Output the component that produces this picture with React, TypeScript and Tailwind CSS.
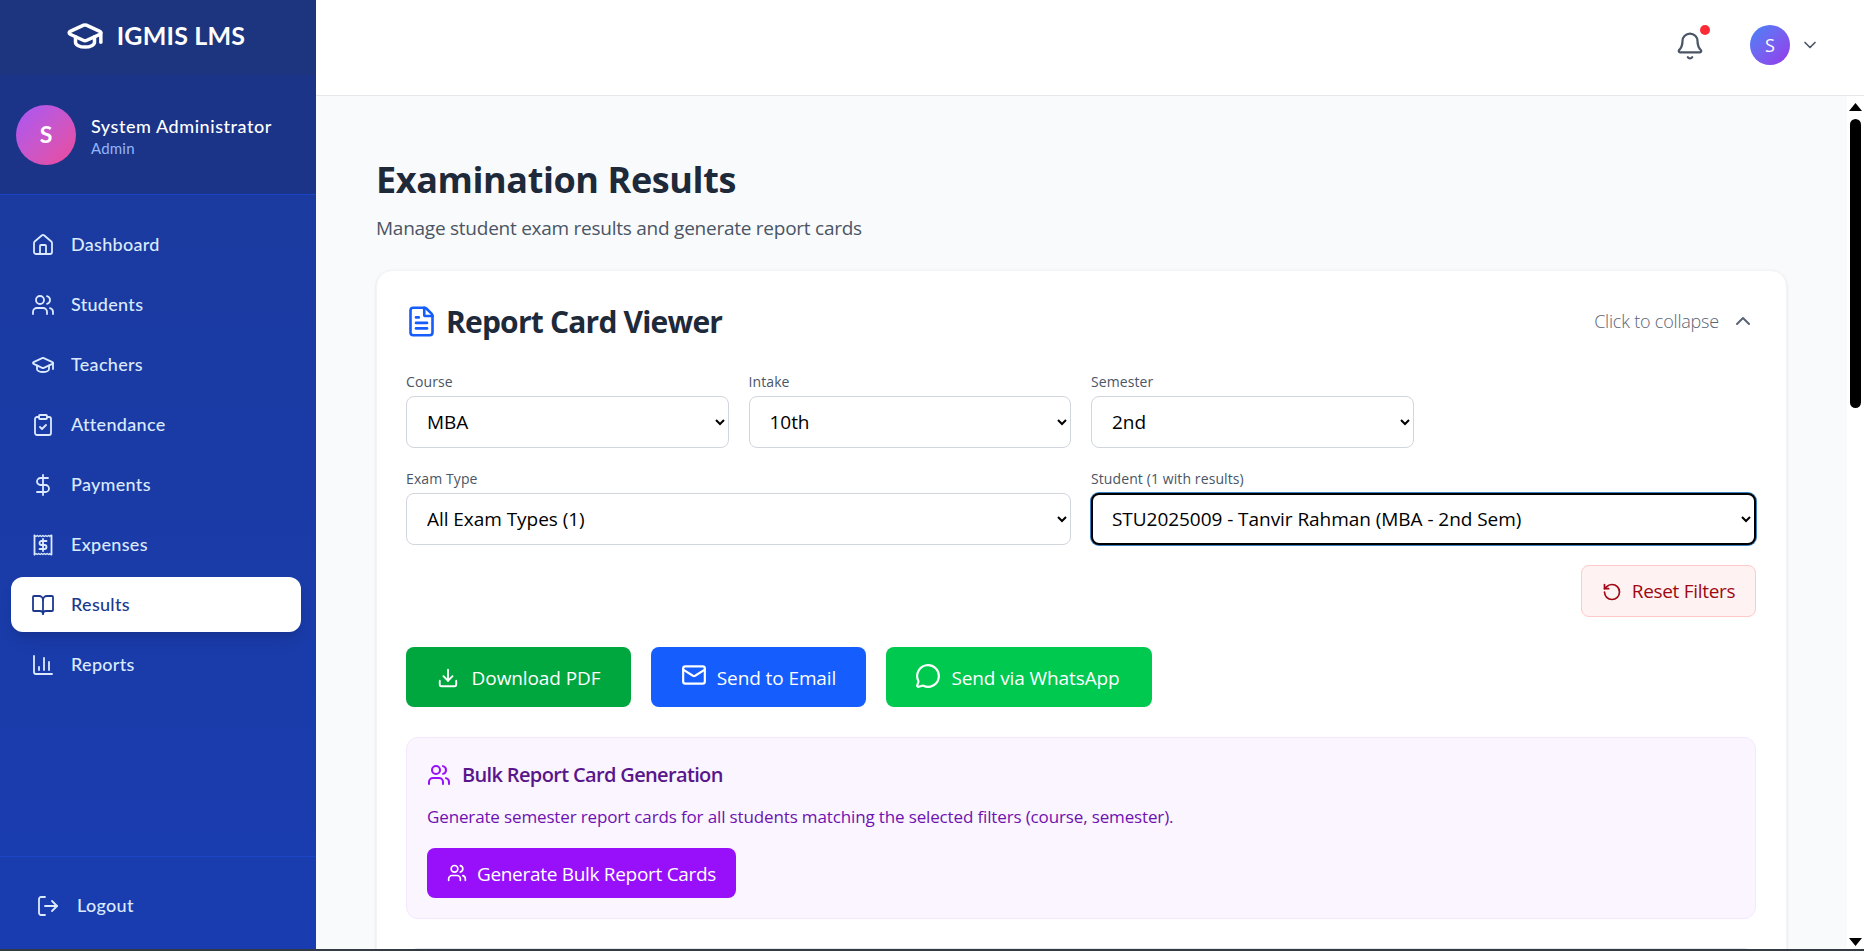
import { Bell, BookOpen, ChartColumn, ChevronDown, ChevronUp, ClipboardCheck, DollarSign, Download, FileText, GraduationCap, House, LogOut, Mail, MessageCircle, RotateCcw, Users } from "lucide-react";
import type { ReactNode } from "react";

function ReceiptDollar({ className }: { className?: string }) {
  return (
    <svg viewBox="0 0 24 24" fill="none" stroke="currentColor" strokeWidth={1.8} strokeLinecap="round" strokeLinejoin="round" className={className}>
      <path d="M3.5 2.5v19M20.5 2.5v19" />
      <path d="M3.5 2.5l1.4 1 1.4-1 1.4 1 1.4-1 1.4 1 1.4-1 1.4 1 1.4-1 1.4 1 1.4-1 1.4 1 .4-1" strokeWidth={1.4} />
      <path d="M3.5 21.5l1.4-1 1.4 1 1.4-1 1.4 1 1.4-1 1.4 1 1.4-1 1.4 1 1.4-1 1.4 1 1.4-1 .4 1" strokeWidth={1.4} />
      <path d="M15.5 8H10.5a2 2 0 0 0 0 4h3a2 2 0 0 1 0 4H8.5" />
      <path d="M12 6v12" />
    </svg>
  );
}

const nav = [
  { label: "Dashboard", icon: <House className="w-[24px] h-[24px]" strokeWidth={1.8} /> },
  { label: "Students", icon: <Users className="w-[24px] h-[24px]" strokeWidth={1.8} /> },
  { label: "Teachers", icon: <GraduationCap className="w-[24px] h-[24px]" strokeWidth={1.8} /> },
  { label: "Attendance", icon: <ClipboardCheck className="w-[24px] h-[24px]" strokeWidth={1.8} /> },
  { label: "Payments", icon: <DollarSign className="w-[24px] h-[24px]" strokeWidth={1.8} /> },
  { label: "Expenses", icon: <ReceiptDollar className="w-[24px] h-[24px]" /> },
  { label: "Results", icon: <BookOpen className="w-[24px] h-[24px]" strokeWidth={1.8} />, active: true },
  { label: "Reports", icon: <ChartColumn className="w-[24px] h-[24px]" strokeWidth={1.8} /> },
];

function Field({ label, value, className, focused }: { label: string; value: string; className?: string; focused?: boolean }) {
  return (
    <div className={className}>
      <label className="block h-[25px] text-[14px] leading-[21px] text-[#4a5565] tracking-[0.1px]">{label}</label>
      <select
        defaultValue={value}
        className={
          focused
            ? "block w-full h-[52px] rounded-lg border-2 border-black ring-1 ring-[#3b82c4] bg-white pl-[15px] pr-[8px] text-[19px] text-black tracking-[-0.05px]"
            : "block w-full h-[52px] rounded-lg border border-gray-300 bg-white pl-[16px] pr-[8px] text-[19px] text-black tracking-[-0.05px]"
        }
      >
        <option>{value}</option>
      </select>
    </div>
  );
}

function ActionButton({ className, icon, children }: { className: string; icon: ReactNode; children: ReactNode }) {
  return (
    <button className={`h-[60px] rounded-lg flex items-center justify-center text-[19px] text-white tracking-[-0.1px] pt-[2px] ${className}`}>
      {icon}
      {children}
    </button>
  );
}

export default function App() {
  return (
    <div className="w-full h-[951px] flex overflow-hidden font-['Open_Sans',sans-serif] bg-white relative">
      <aside className="w-[316px] shrink-0 h-full bg-gradient-to-b from-[#1b3a9c] to-[#193cb0] flex flex-col font-['Lato',sans-serif]">
        <div className="h-[75px] bg-[#1d357e] flex items-center justify-center gap-[13px] text-white pb-[3px] pr-[5px]">
          <GraduationCap className="w-[38px] h-[38px]" strokeWidth={2.2} />
          <span className="text-[25px] font-bold tracking-[0.2px]">IGMIS LMS</span>
        </div>
        <div className="h-[120px] bg-[#1b3488] border-b border-[#1b45c4] flex items-center pl-[16px] gap-[15px]">
          <div className="w-[60px] h-[60px] rounded-full bg-gradient-to-br from-[#a855f7] to-[#ec4899] flex items-center justify-center text-white text-[23px] font-bold">S</div>
          <div className="flex flex-col pt-[3px]">
            <span className="text-white text-[18px] leading-[24px] tracking-[0.55px] font-medium">System Administrator</span>
            <span className="text-[#93b4fb] text-[15px] leading-[20px] tracking-[0.2px]">Admin</span>
          </div>
        </div>
        <nav className="flex-1 flex flex-col gap-[5px] pl-[11px] pr-[15px] pt-[22px]">
          {nav.map((n) => (
            <div
              key={n.label}
              className={
                n.active
                  ? "h-[55px] shrink-0 rounded-xl bg-white text-[#1c398e] shadow-lg flex items-center pl-[20px] gap-[16px] text-[18px] font-medium tracking-[0.3px]"
                  : "h-[55px] shrink-0 rounded-xl text-[#dbeafe] flex items-center pl-[20px] gap-[16px] text-[18px] font-medium tracking-[0.3px]"
              }
            >
              {n.icon}
              <span>{n.label}</span>
            </div>
          ))}
        </nav>
        <div className="h-[95px] border-t border-[#1b45c4] flex items-center pl-[36px] gap-[17px] text-[#dbeafe] text-[18px] font-medium tracking-[0.3px] pt-[3px]">
          <LogOut className="w-[24px] h-[24px]" strokeWidth={1.8} />
          <span>Logout</span>
        </div>
      </aside>

      <div className="flex-1 min-w-0 flex flex-col">
        <header className="h-[96px] shrink-0 bg-white border-b border-[#e5e7eb] flex items-center justify-end pr-[44px] pb-[5px]">
          <div className="relative mr-[45px] mt-[1px] text-[#4a5565]">
            <Bell className="w-[30px] h-[30px]" strokeWidth={1.8} />
            <span className="absolute -top-[6px] -right-[5px] w-[10px] h-[10px] rounded-full bg-[#fb2c36]" />
          </div>
          <div className="w-[40px] h-[40px] rounded-full bg-gradient-to-br from-[#3b82f6] to-[#9333ea] flex items-center justify-center text-white text-[18px] font-medium">S</div>
          <ChevronDown className="w-[20px] h-[20px] ml-[10px] text-[#4a5565]" strokeWidth={2} />
        </header>

        <div className="flex-1 min-h-0 flex">
          <main className="flex-1 min-w-0 bg-[#f9fafb] px-[60px] pt-[60px] overflow-hidden">
            <h1 className="text-[36px] leading-[48px] font-bold text-[#1e2939] tracking-[-0.4px]">Examination Results</h1>
            <p className="mt-[9px] text-[19px] leading-[30px] text-[#4a5565] tracking-[-0.25px]">Manage student exam results and generate report cards</p>
            <section className="mt-[27px] bg-white rounded-2xl border border-gray-100 shadow-sm pl-[29px] pr-[30px] pt-[26px]">
              <div className="flex items-center justify-between h-[48px] mb-[26px]">
                <div className="flex items-center gap-[8px]">
                  <FileText className="w-[33px] h-[33px] text-[#155dfc] -ml-[1px]" strokeWidth={1.9} />
                  <h2 className="text-[30px] font-bold text-[#1e2939] tracking-[-0.8px]">Report Card Viewer</h2>
                </div>
                <div className="flex items-center gap-[12px] pr-[1px] text-[#5a6474]">
                  <span className="text-[18px] font-light tracking-[-0.2px]">Click to collapse</span>
                  <ChevronUp className="w-[24px] h-[24px]" strokeWidth={2} />
                </div>
              </div>

              <div className="grid grid-cols-4 gap-x-[20px] gap-y-[20px]">
                <Field label="Course" value="MBA" />
                <Field label="Intake" value="10th" />
                <Field label="Semester" value="2nd" />
                <div />
                <Field label="Exam Type" value="All Exam Types (1)" className="col-span-2" />
                <Field label="Student (1 with results)" value="STU2025009 - Tanvir Rahman (MBA - 2nd Sem)" className="col-span-2" focused />
              </div>

              <div className="flex justify-end mt-[20px]">
                <button className="h-[52px] w-[175px] rounded-lg bg-[#fef2f2] border border-[#ffc9c9] text-[#9f0712] flex items-center justify-center gap-[10px] text-[19px] tracking-[-0.3px] pt-[1px]">
                  <RotateCcw className="w-[20px] h-[20px]" strokeWidth={2} />
                  Reset Filters
                </button>
              </div>

              <div className="flex gap-[20px] mt-[30px]">
                <ActionButton className="w-[225px] bg-[#00a63e] gap-[13px]" icon={<Download className="w-[22px] h-[22px]" strokeWidth={2} />}>Download PDF</ActionButton>
                <ActionButton className="w-[215px] bg-[#155dfc] gap-[10px]" icon={<Mail className="w-[26px] h-[26px] mb-[6px]" strokeWidth={2} />}>Send to Email</ActionButton>
                <ActionButton className="w-[266px] bg-[#00c950] gap-[10px] pr-[3px]" icon={<MessageCircle className="w-[26px] h-[26px] mb-[5px]" strokeWidth={2} />}>Send via WhatsApp</ActionButton>
              </div>

              <div className="mt-[30px] rounded-xl bg-[#faf5ff] border border-[#f3e8ff] p-[20px]">
                <div className="flex items-center gap-[11px] h-[34px]">
                  <Users className="w-[24px] h-[24px] text-[#9810fa]" strokeWidth={2} />
                  <span className="text-[20px] font-semibold text-[#59168b] tracking-[-0.65px]">Bulk Report Card Generation</span>
                </div>
                <p className="mt-[13px] h-[24px] text-[17px] leading-[24px] text-[#6e11b0] tracking-[-0.14px]">Generate semester report cards for all students matching the selected filters (course, semester).</p>
                <button className="mt-[19px] h-[50px] w-[309px] rounded-lg bg-[#9810fa] text-white flex items-center justify-center gap-[10px] text-[19px] tracking-[-0.3px] pt-[2px]">
                  <Users className="w-[20px] h-[20px] mb-[2px]" strokeWidth={2} />
                  Generate Bulk Report Cards
                </button>
              </div>

              <div className="mt-[29px] h-[120px] rounded-xl border border-gray-200" />
            </section>
          </main>
          <div className="w-[17px] shrink-0 bg-white flex flex-col items-center pt-[7px] pb-[5px]">
            <svg viewBox="0 0 13 8" className="w-[13px] h-[8px] shrink-0"><polygon points="6.5,0 13,8 0,8" fill="#000" /></svg>
            <div className="w-[11px] h-[289px] shrink-0 mt-[8px] bg-black rounded-full" />
            <div className="flex-1" />
            <svg viewBox="0 0 13 8" className="w-[13px] h-[8px] shrink-0"><polygon points="0,0 13,0 6.5,8" fill="#000" /></svg>
          </div>
        </div>
      </div>
      <div className="absolute left-0 right-0 bottom-0 h-[2px] bg-[#333a44]" />
    </div>
  );
}
